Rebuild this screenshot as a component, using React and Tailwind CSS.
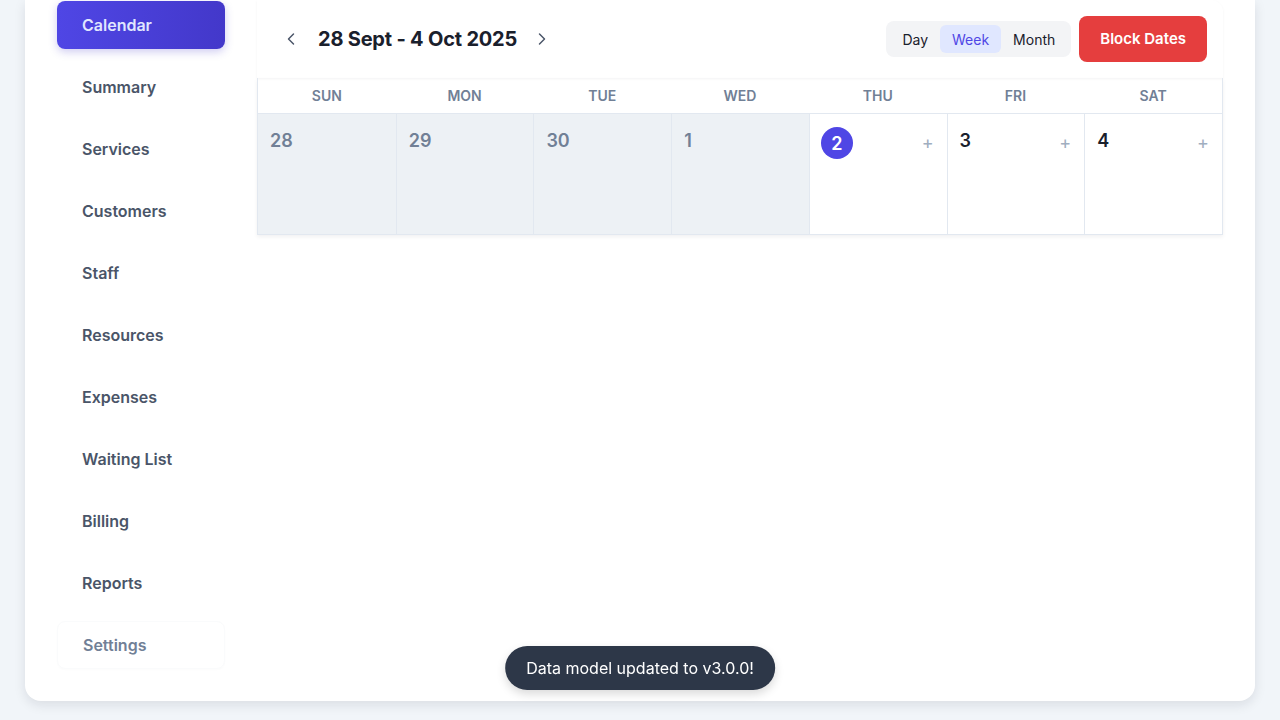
import { ChevronLeft, ChevronRight } from 'lucide-react';

const navItems = [
  'Calendar',
  'Summary',
  'Services',
  'Customers',
  'Staff',
  'Resources',
  'Expenses',
  'Waiting List',
  'Billing',
  'Reports',
];

const days = [
  { label: 'SUN', num: 28, past: true },
  { label: 'MON', num: 29, past: true },
  { label: 'TUE', num: 30, past: true },
  { label: 'WED', num: 1, past: true },
  { label: 'THU', num: 2, today: true },
  { label: 'FRI', num: 3 },
  { label: 'SAT', num: 4 },
];

const App = () => {
  return (
    <div className="min-h-screen bg-[#f1f5f9] font-['Inter',sans-serif]">
      <div className="mx-[25px] bg-white rounded-b-2xl shadow-[0_4px_12px_rgba(15,23,42,0.1)] px-8 pb-8 flex gap-8">
        {/* sidebar */}
        <nav className="w-[168px] flex flex-col gap-3.5 pt-px">
          {navItems.map((item, i) => (
            <div
              key={item}
              className={
                i === 0
                  ? 'h-12 px-[25px] flex items-center rounded-lg bg-gradient-to-r from-[#4f46e5] to-[#4338ca] text-[#e0e7ff] font-semibold text-[16px] shadow-[0_3px_8px_rgba(67,56,202,0.25)]'
                  : 'h-12 px-[25px] flex items-center text-[#4a5568] font-semibold text-[16px]'
              }
            >
              {item}
            </div>
          ))}
          <div className="h-12 px-[25px] flex items-center text-[#718096] font-semibold text-[16px] rounded-lg border border-[#fafbfc] shadow-[0_1px_2px_rgba(0,0,0,0.015)]">
            Settings
          </div>
        </nav>

        {/* calendar */}
        <div className="flex-1 relative">
          <div className="h-[78px] flex items-center justify-between pl-5 pr-4 rounded-tr-xl shadow-[0_1px_3px_rgba(15,23,42,0.05)]">
            <div className="flex items-center">
              <button className="p-1 text-[#4a5568]">
                <ChevronLeft size={20} strokeWidth={1.75} />
              </button>
              <h2 className="ml-[13px] text-[20px] font-bold text-[#1a202c] tracking-[-0.2px]">
                28 Sept - 4 Oct 2025
              </h2>
              <button className="ml-[11px] p-1 text-[#4a5568]">
                <ChevronRight size={20} strokeWidth={1.75} />
              </button>
            </div>
            <div className="flex items-center gap-2">
              <div className="h-9 flex items-center bg-[#f3f4f6] rounded-lg px-1">
                <span className="px-3 h-7 flex items-center text-[14px] text-[#1a202c]">Day</span>
                <span className="px-3 h-7 flex items-center text-[14px] text-[#4f46e5] bg-[#e0e7ff] rounded-md">Week</span>
                <span className="px-3 h-7 flex items-center text-[14px] text-[#1a202c]">Month</span>
              </div>
              <button className="h-[46px] px-[21px] bg-[#e53e3e] text-white font-semibold text-[15px] rounded-lg">
                Block Dates
              </button>
            </div>
          </div>

          <div className="border-x border-b border-[#e2e8f0] shadow-[0_2px_4px_rgba(15,23,42,0.06)]">
            <div className="grid grid-cols-7 h-9 border-b border-[#e2e8f0]">
              {days.map((d) => (
                <div key={d.label} className="flex items-center justify-center text-[14px] font-semibold text-[#718096]">
                  {d.label}
                </div>
              ))}
            </div>
            <div className="grid grid-cols-7 h-[120px]">
              {days.map((d, i) => (
                <div
                  key={d.label}
                  className={`relative px-3 pt-[15px] ${i > 0 ? 'border-l border-[#e2e8f0]' : ''} ${d.past ? 'bg-[#edf1f5]' : 'bg-white'}`}
                >
                  {d.today ? (
                    <span className="-mt-[2px] -ml-px w-8 h-8 rounded-full bg-[#4f46e5] text-white font-semibold text-[18px] flex items-center justify-center">
                      {d.num}
                    </span>
                  ) : (
                    <span className={`text-[18px] font-semibold leading-6 ${d.past ? 'text-[#718096]' : 'text-[#1a202c]'}`}>
                      {d.num}
                    </span>
                  )}
                  {!d.past && (
                    <span className="absolute right-[13px] top-[20px] text-[18px] leading-none text-[#a0aec0]">+</span>
                  )}
                </div>
              ))}
            </div>
          </div>
        </div>
      </div>

      <div className="fixed left-1/2 -translate-x-1/2 top-[646px] h-11 px-[21px] flex items-center rounded-full bg-[#2d3748] text-white text-[16px] shadow-[0_4px_10px_rgba(0,0,0,0.15)]">
        Data model updated to v3.0.0!
      </div>
    </div>
  );
};

export default App;
